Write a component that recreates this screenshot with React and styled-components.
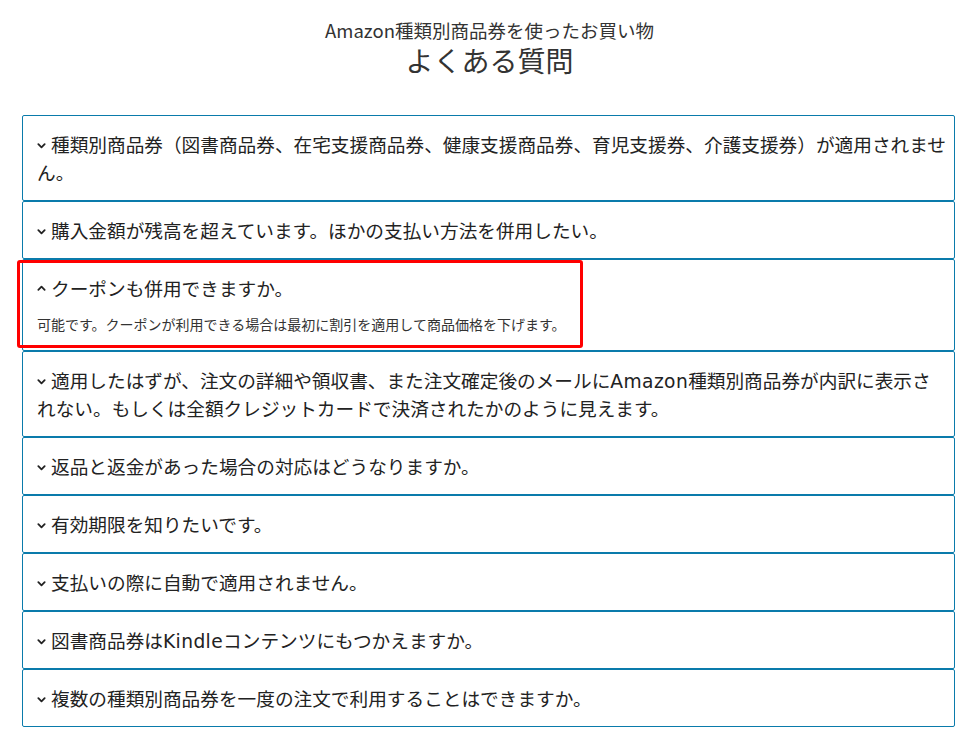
import React, { useState } from 'react';
import styled, { createGlobalStyle } from 'styled-components';

const GlobalStyle = createGlobalStyle`
	body {
		margin: 0;
		background: #fff;
		font-family: 'Noto Sans CJK JP', 'Noto Sans', sans-serif;
		color: #333;
	}
`;

const faqs = [
	{
		q: '種類別商品券（図書商品券、在宅支援商品券、健康支援商品券、育児支援券、介護支援券）が適用されません。',
	},
	{ q: '購入金額が残高を超えています。ほかの支払い方法を併用したい。' },
	{
		q: 'クーポンも併用できますか。',
		a: '可能です。クーポンが利用できる場合は最初に割引を適用して商品価格を下げます。',
		marked: true,
	},
	{
		q: '適用したはずが、注文の詳細や領収書、また注文確定後のメールにAmazon種類別商品券が内訳に表示されない。もしくは全額クレジットカードで決済されたかのように見えます。',
	},
	{ q: '返品と返金があった場合の対応はどうなりますか。' },
	{ q: '有効期限を知りたいです。' },
	{ q: '支払いの際に自動で適用されません。' },
	{ q: '図書商品券はKindleコンテンツにもつかえますか。' },
	{ q: '複数の種類別商品券を一度の注文で利用することはできますか。' },
];

// latin words get their own run so they sit wider, like the original font
const withLatin = (text) =>
	text
		.split(/([A-Za-z]+)/)
		.map((part, i) => (/^[A-Za-z]+$/.test(part) ? <Latin key={i}>{part}</Latin> : part));

const Chevron = ({ open }) => (
	<ChevronIcon viewBox="0 0 10 6" $open={open}>
		<path
			d={open ? 'M1.5 5L5 1.5L8.5 5' : 'M1.5 1L5 4.5L8.5 1'}
			fill="none"
			stroke="#222"
			strokeWidth="2"
			strokeLinecap="round"
			strokeLinejoin="round"
		/>
	</ChevronIcon>
);

const App = () => {
	const [openIdx, setOpenIdx] = useState(2);

	return (
		<Page>
			<GlobalStyle />
			<Header>
				<Subtitle>Amazon種類別商品券を使ったお買い物</Subtitle>
				<Title>よくある質問</Title>
			</Header>
			<List>
				{faqs.map((item, i) => {
					const open = i === openIdx;
					return (
						<Card key={i}>
							<Question onClick={() => setOpenIdx(open ? -1 : i)}>
								<Chevron open={open} />
								{withLatin(item.q)}
							</Question>
							{open && item.a && <Answer>{item.a}</Answer>}
							{item.marked && <Marker />}
						</Card>
					);
				})}
			</List>
		</Page>
	);
};

export default App;

const Page = styled.div`
	padding: 18px 15px 12px 22px;
`;
const Header = styled.header`
	text-align: center;
	padding-left: 2px;
`;
const Subtitle = styled.div`
	font-size: 18.5px;
	line-height: 24px;
	color: #333;
`;
const Title = styled.h1`
	margin: 0;
	font-size: 28px;
	font-weight: 400;
	line-height: 36px;
	color: #333;
`;
const List = styled.div`
	margin-top: 37px;
	display: flex;
	flex-direction: column;
`;
const Card = styled.div`
	position: relative;
	border: 1px solid #0a7bab;
	border-radius: 2px;
	padding: 14px 6px 14px 14px;
`;
const Question = styled.div`
	font-size: 18.67px;
	line-height: 28px;
	color: #222;
	cursor: pointer;
`;
const Latin = styled.span`
	font-family: 'DejaVu Sans', 'Noto Sans', sans-serif;
	letter-spacing: 0.4px;
	line-height: 1;
`;
const ChevronIcon = styled.svg`
	width: 9px;
	height: 6px;
	margin-right: 5px;
	vertical-align: ${(p) => (p.$open ? '5px' : '3px')};
`;
const Answer = styled.p`
	margin: 12px 0 2px;
	font-size: 14px;
	line-height: 20px;
	color: #333;
`;
const Marker = styled.div`
	position: absolute;
	top: 0;
	left: -6px;
	width: 560px;
	height: 82px;
	border: 3px solid #ff0000;
	border-radius: 3px;
	pointer-events: none;
`;
